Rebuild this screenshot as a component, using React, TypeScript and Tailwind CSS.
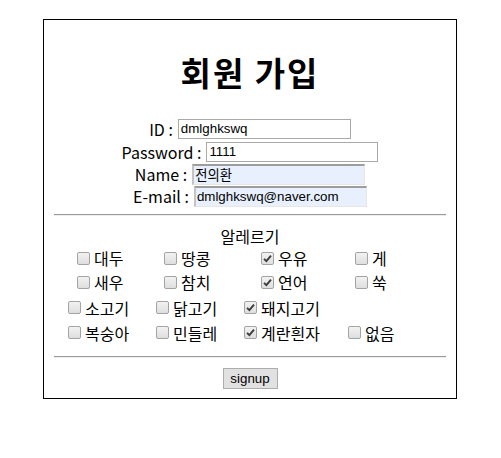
import React from 'react';

type Item = { label: string; checked?: boolean };

function Check({ item }: { item: Item }) {
  return (
    <label className="flex items-center">
      <span className="mr-[4px] flex h-[13px] w-[13px] items-center justify-center rounded-[2px] border border-[#a3a3a3] bg-gradient-to-b from-[#f2f2f2] to-[#dedede]">
        {item.checked && (
          <svg width="9" height="9" viewBox="0 0 9 9">
            <path d="M1 4.8 L3.4 7.2 L8 1.6" fill="none" stroke="#3c3c3c" strokeWidth="1.9" />
          </svg>
        )}
      </span>
      <span>{item.label}</span>
    </label>
  );
}

export default function App() {
  const topRows: Item[] = [
    { label: '대두' },
    { label: '땅콩' },
    { label: '우유', checked: true },
    { label: '게' },
    { label: '새우' },
    { label: '참치' },
    { label: '연어', checked: true },
    { label: '쑥' },
  ];
  const bottomRows: Item[] = [
    { label: '소고기' },
    { label: '닭고기' },
    { label: '돼지고기', checked: true },
    { label: '' },
    { label: '복숭아' },
    { label: '민들레' },
    { label: '계란흰자', checked: true },
    { label: '없음' },
  ];

  const plainInput =
    "h-[20px] border border-[#a9a9a9] bg-white px-[2px] font-['Liberation_Sans',Arial,sans-serif] text-[13.33px] text-black outline-none";
  const filledInput =
    "h-[21px] border-t-2 border-l-2 border-r border-b border-t-[#9d9d9d] border-l-[#c4c4c4] border-r-[#e6e6e6] border-b-[#e6e6e6] bg-[#e8f0fe] px-[1px] font-['Liberation_Sans',Arial,sans-serif] text-[13.33px] text-black outline-none";

  return (
    <div className="min-h-[458px] w-[501px] bg-white pt-[19px] pl-[43px] font-['Noto_Sans_CJK_KR','Noto_Sans',sans-serif] text-[16px] text-black">
      <div className="flex h-[380px] w-[414px] flex-col border border-black">
        <h1 className="mt-[32px] text-center text-[33px] font-bold leading-[40px] tracking-[2px]">회원 가입</h1>

        <div className="mt-[25px] flex flex-col leading-[20px]">
          <div className="flex h-[23px] items-center justify-center">
            <span>ID :</span>
            <input readOnly value="dmlghkswq" className={`ml-[5px] w-[173px] ${plainInput}`} />
          </div>
          <div className="flex h-[23px] items-center justify-center">
            <span>Password :</span>
            <input readOnly value="1111" className={`ml-[5px] w-[172px] ${plainInput}`} />
          </div>
          <div className="flex h-[22px] items-center justify-center">
            <span>Name :</span>
            <input readOnly value="전의환" className={`ml-[5px] w-[173px] ${filledInput} font-['Noto_Sans_CJK_KR',sans-serif]`} />
          </div>
          <div className="flex h-[22px] items-center justify-center">
            <span>E-mail :</span>
            <input readOnly value="dmlghkswq@naver.com" className={`ml-[5px] w-[173px] ${filledInput}`} />
          </div>
        </div>

        <hr className="mx-[10px] mt-[7px] h-[2px] border-t border-b border-t-[#9a9a9a] border-b-[#eeeeee]" />

        <div className="mt-[10px] text-center leading-[20px]">알레르기</div>

        <div className="grid grid-cols-[87px_97px_94px_60px] pl-[33px] leading-[20px]">
          {topRows.map((it, i) => (
            <div key={i} className="flex h-[24px] items-center">
              <Check item={it} />
            </div>
          ))}
        </div>
        <div className="mt-[1px] grid grid-cols-[88px_88px_104px_60px] pl-[24px] leading-[20px]">
          {bottomRows.map((it, i) => (
            <div key={i} className="flex h-[25px] items-center">
              {it.label && <Check item={it} />}
            </div>
          ))}
        </div>

        <hr className="mx-[10px] mt-[11px] h-[2px] border-t border-b border-t-[#9a9a9a] border-b-[#eeeeee]" />

        <div className="mt-[10px] flex justify-center">
          <button className="h-[21px] w-[55px] border border-[#adadad] bg-[#e1e1e1] font-['Liberation_Sans',Arial,sans-serif] text-[13.33px] leading-[17px] text-black">
            signup
          </button>
        </div>
      </div>
    </div>
  );
}
